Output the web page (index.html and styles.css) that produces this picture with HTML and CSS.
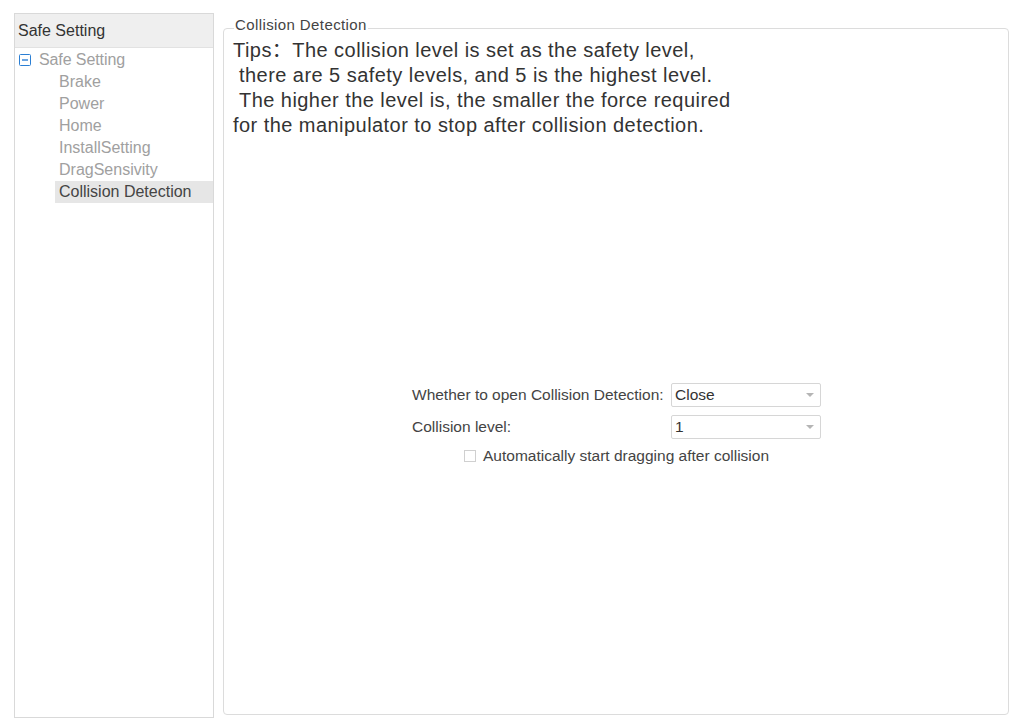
FILE: index.html
```html
<!DOCTYPE html>
<html>
<head>
<meta charset="utf-8">
<link rel="stylesheet" href="styles.css">
</head>
<body>
<div class="app">
  <aside class="side">
    <div class="side-head">Safe Setting</div>
    <ul class="tree">
      <li class="tree-root">
        <svg class="minus" width="12" height="12" viewBox="0 0 12 12"><rect x="0.5" y="0.5" width="11" height="11" rx="1" fill="none" stroke="#2b7fd4"/><path d="M3 6h6" stroke="#2b7fd4" stroke-width="1.4"/></svg>
        <span>Safe Setting</span>
      </li>
      <li class="tree-item">Brake</li>
      <li class="tree-item">Power</li>
      <li class="tree-item">Home</li>
      <li class="tree-item">InstallSetting</li>
      <li class="tree-item">DragSensivity</li>
      <li class="tree-item selected">Collision Detection</li>
    </ul>
  </aside>
  <section class="group">
    <div class="group-title">Collision Detection</div>
    <div class="group-box">
      <p class="tips">Tips：The collision level is set as the safety level,<br>&nbsp;there are 5 safety levels, and 5 is the highest level.<br>&nbsp;The higher the level is, the smaller the force required<br>for the manipulator to stop after collision detection.</p>
      <div class="form">
        <div class="row">
          <label class="lbl">Whether to open Collision Detection:</label>
          <div class="select"><span>Close</span><i class="arrow"></i></div>
        </div>
        <div class="row">
          <label class="lbl">Collision level:</label>
          <div class="select"><span>1</span><i class="arrow"></i></div>
        </div>
        <div class="check-row">
          <span class="box"></span><span>Automatically start dragging after collision</span>
        </div>
      </div>
    </div>
  </section>
</div>
</body>
</html>
```
FILE: styles.css
```css
html, body {
  margin: 0;
  padding: 0;
  background: #ffffff;
  width: 1014px;
  height: 720px;
  overflow: hidden;
  font-family: "Liberation Sans", Arial, "Noto Sans CJK SC", sans-serif;
}
.app {
  display: flex;
  padding: 13px 5px 3px 14px;
  height: 720px;
  box-sizing: border-box;
  gap: 9px;
}
.side {
  width: 200px;
  border: 1px solid #d9d9d9;
  box-sizing: border-box;
  height: 705px;
}
.side-head {
  height: 34px;
  background: #efefef;
  border-bottom: 1px solid #e2e2e2;
  font-size: 16px;
  color: #333;
  line-height: 34px;
  padding-left: 3px;
  box-sizing: border-box;
}
.tree {
  list-style: none;
  margin: 0;
  padding: 1px 0 0 0;
}
.tree li {
  height: 22px;
  line-height: 22px;
  font-size: 16px;
  color: #a0a0a0;
}
.tree-root {
  display: flex;
  align-items: center;
  padding-left: 4px;
}
.minus {
  margin-right: 8px;
  margin-top: -1px;
}
.tree-root span {
  letter-spacing: -0.1px;
}
.tree-item {
  margin-left: 40px;
  padding-left: 4px;
}
.tree-item.selected {
  background: #e6e6e6;
  color: #444;
}
.group {
  flex: 1;
  position: relative;
  padding-top: 15px;
}
.group-title {
  position: absolute;
  top: 4px;
  left: 11px;
  background: #fff;
  padding: 0 1px;
  font-size: 15px;
  letter-spacing: 0.4px;
  color: #444;
  line-height: 16px;
}
.group-box {
  border: 1px solid #dcdcdc;
  border-radius: 4px;
  height: 687px;
  box-sizing: border-box;
  padding: 9px 9px 0 9px;
}
.tips {
  margin: 0;
  font-size: 20px;
  letter-spacing: 0.45px;
  line-height: 25px;
  color: #333;
  white-space: nowrap;
}
.form {
  margin: 245px 0 0 179px;
  font-size: 15.5px;
  color: #444;
}
.row {
  display: flex;
  align-items: center;
  height: 24px;
  margin-bottom: 8px;
}
.lbl {
  width: 259px;
  white-space: nowrap;
}
.select {
  width: 150px;
  height: 24px;
  border: 1px solid #d6d6d6;
  border-radius: 2px;
  box-sizing: border-box;
  display: flex;
  align-items: center;
  justify-content: space-between;
  padding: 0 6px 0 3px;
  color: #333;
}
.arrow {
  width: 0;
  height: 0;
  border-left: 4px solid transparent;
  border-right: 4px solid transparent;
  border-top: 4px solid #b5b5b5;
}
.check-row {
  display: flex;
  align-items: center;
  margin-left: 52px;
  margin-top: 1px;
  gap: 7px;
  white-space: nowrap;
}
.box {
  width: 12px;
  height: 12px;
  border: 1px solid #d0d0d0;
  box-sizing: border-box;
}
```
